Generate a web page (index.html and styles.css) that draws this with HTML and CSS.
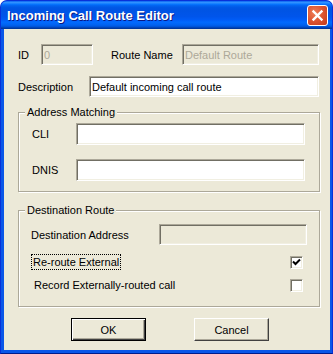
FILE: index.html
```html
<!DOCTYPE html>
<html lang="en">

<head>
    <meta charset="UTF-8">
    <title>Incoming Call Route Editor</title>
    <link rel="stylesheet" href="styles.css">
</head>

<body>
    <div class="window">
        <div class="titlebar">
            <span class="title">Incoming Call Route Editor</span>
            <button class="close" aria-label="Close">
                <svg width="13" height="13" viewBox="0 0 13 13">
                    <path d="M2.5 2.5 L10.5 10.5 M10.5 2.5 L2.5 10.5" stroke="#fff" stroke-width="2.4" stroke-linecap="square" fill="none"/>
                </svg>
            </button>
        </div>

        <div class="client">
            <div class="row row-top">
                <label class="lbl lbl-id">ID</label>
                <input class="field field-id" type="text" value="0" disabled>
                <label class="lbl lbl-name">Route Name</label>
                <input class="field field-name" type="text" value="Default Route" disabled>
            </div>
            <div class="row row-desc">
                <label class="lbl lbl-desc">Description</label>
                <input class="field field-desc" type="text" value="Default incoming call route">
            </div>

            <fieldset class="group group-match">
                <legend>Address Matching</legend>
                <div class="row row-cli">
                    <label class="lbl lbl-match">CLI</label>
                    <input class="field field-match" type="text">
                </div>
                <div class="row row-dnis">
                    <label class="lbl lbl-match">DNIS</label>
                    <input class="field field-match" type="text">
                </div>
            </fieldset>

            <fieldset class="group group-dest">
                <legend>Destination Route</legend>
                <div class="row row-dest">
                    <label class="lbl lbl-dest">Destination Address</label>
                    <input class="field field-dest" type="text" disabled>
                </div>
                <div class="check-row check-first">
                    <span class="check-text focused">Re-route External</span>
                    <span class="checkbox">
                        <svg width="9" height="9" viewBox="0 0 9 9">
                            <path d="M1 3.5 L3.5 6 L8 1.5" stroke="#000" stroke-width="2" fill="none"/>
                        </svg>
                    </span>
                </div>
                <div class="check-row check-second">
                    <span class="check-text">Record Externally-routed call</span>
                    <span class="checkbox"></span>
                </div>
            </fieldset>

            <div class="buttons">
                <button class="btn btn-default">OK</button>
                <button class="btn btn-cancel">Cancel</button>
            </div>
        </div>
    </div>
</body>

</html>
```

FILE: styles.css
```css
body {
    margin: 0;
    font-family: "Liberation Sans", Arial, sans-serif;
    font-size: 11px;
    color: #000;
    background: #fff;
}

.window {
    width: 333px;
    height: 354px;
    box-sizing: border-box;
    display: flex;
    flex-direction: column;
    background: #0a56e8;
    border: 1px solid #0831d9;
    border-bottom-color: #001c8c;
    border-radius: 7px 7px 0 0;
}

.titlebar {
    height: 28px;
    display: flex;
    align-items: center;
    justify-content: space-between;
    padding: 0 4px 0 6px;
    border-radius: 6px 6px 0 0;
    background: linear-gradient(to bottom, #0058ee 0%, #3593ff 4%, #288eff 7%, #127dff 10%, #036ffc 13%, #0262ee 17%, #0057e5 24%, #0054e3 30%, #0055eb 56%, #005bf5 66%, #026afe 76%, #0062ef 86%, #0052d6 92%, #0040ab 96%, #003092 100%);
}

.title {
    color: #fff;
    font-family: "Liberation Sans", Arial, sans-serif;
    font-weight: bold;
    font-size: 13px;
    text-shadow: 1px 1px 0 #0a1883;
    padding-top: 1px;
}

.close {
    width: 21px;
    height: 21px;
    padding: 0;
    margin-top: 1px;
    display: flex;
    align-items: center;
    justify-content: center;
    border: 1px solid #fff;
    border-radius: 3px;
    background: radial-gradient(circle at 35% 35%, #ee7e58 0%, #dc5430 50%, #c1391a 100%);
}

.client {
    flex: 1;
    margin: 0 2px 3px 3px;
    background: #ece9d8;
    padding: 15px 10px 0 14px;
}

.row {
    display: flex;
    align-items: center;
}

.row-desc {
    margin-top: 11px;
}

.lbl {
    display: block;
}

.lbl-id {
    width: 23px;
}

.lbl-name {
    width: 71px;
    margin-left: 18px;
}

.lbl-desc {
    width: 71px;
}

.lbl-match {
    width: 44px;
}

.lbl-dest {
    width: 128px;
}

.field {
    box-sizing: border-box;
    height: 21px;
    margin: 0;
    padding: 0 2px;
    font-family: "Liberation Sans", Arial, sans-serif;
    font-size: 11px;
    color: #000;
    background: #fff;
    border: 1px solid;
    border-color: #aca899 #fff #fff #aca899;
    box-shadow: inset 1px 1px 0 #716f64, inset -1px -1px 0 #f1efe2;
    outline: none;
}

.field:disabled {
    background: #ece9d8;
    color: #aca899;
}

.field-id {
    width: 52px;
}

.field-name {
    width: 137px;
}

.field-desc {
    width: 230px;
}

.field-match {
    width: 229px;
    height: 22px;
}

.field-dest {
    width: 148px;
}

.group {
    margin: 9px 0 0 0;
    padding: 0;
    width: 302px;
    box-sizing: border-box;
    border: 1px solid #aca899;
    box-shadow: inset 1px 1px 0 #fff, 1px 1px 0 #fff;
}

.group legend {
    margin-left: 6px;
    padding: 0 2px;
    line-height: 13px;
    background: #ece9d8;
}

.group-match {
    padding-bottom: 10px;
}

.group-match .row {
    margin-left: 13px;
}

.row-cli {
    margin-top: 4px;
}

.row-dnis {
    margin-top: 14px;
}

.group-dest {
    margin-top: 12px;
    padding-bottom: 13px;
}

.row-dest {
    margin: 7px 0 0 12px;
}

.check-row {
    display: flex;
    align-items: center;
    justify-content: space-between;
    width: 272px;
    height: 16px;
    margin-left: 12px;
}

.check-first {
    margin-top: 9px;
}

.check-second {
    margin-top: 7px;
}

.check-text {
    padding: 0 1px;
    line-height: 14px;
    border: 1px solid transparent;
}

.check-second .check-text {
    padding-left: 2px;
}

.check-text.focused {
    border: 1px dotted #000;
}

.checkbox {
    box-sizing: border-box;
    width: 13px;
    height: 13px;
    display: flex;
    align-items: center;
    justify-content: center;
    background: #fff;
    border: 1px solid;
    border-color: #aca899 #fff #fff #aca899;
    box-shadow: inset 1px 1px 0 #716f64, inset -1px -1px 0 #f1efe2;
}

.buttons {
    display: flex;
    gap: 48px;
    margin: 11px 0 0 53px;
}

.btn {
    box-sizing: border-box;
    width: 75px;
    height: 23px;
    padding: 0;
    font-family: "Liberation Sans", Arial, sans-serif;
    font-size: 11px;
    color: #000;
    background: #ece9d8;
    border: 1px solid;
    border-color: #fff #404040 #404040 #fff;
    box-shadow: inset -1px -1px 0 #aca899;
}

.btn-default {
    border: 1px solid #000;
    box-shadow: inset 1px 1px 0 #fff, inset -1px -1px 0 #404040, inset -2px -2px 0 #aca899;
}
```
